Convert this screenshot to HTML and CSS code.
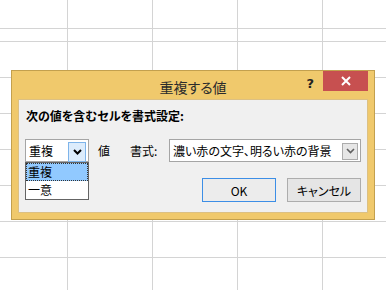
FILE: index.html
```html
<!DOCTYPE html>
<html lang="ja">
<head>
  <meta charset="UTF-8">
  <title>重複する値</title>
  <link rel="stylesheet" href="styles.css">
</head>
<body>
  <div class="sheet">
    <div></div><div></div><div></div><div></div><div></div>
    <div></div><div></div><div></div><div></div><div></div>
    <div></div><div></div><div></div><div></div><div></div>
    <div></div><div></div><div></div><div></div><div></div>
    <div></div><div></div><div></div><div></div><div></div>
    <div></div><div></div><div></div><div></div><div></div>
    <div></div><div></div><div></div><div></div><div></div>
    <div></div><div></div><div></div><div></div><div></div>
    <div></div><div></div><div></div><div></div><div></div>
  </div>

  <div class="dialog">
    <div class="titlebar">
      <span></span>
      <span class="title">重複する値</span>
      <div class="controls">
        <span class="help">?</span>
        <span class="close">
          <svg width="10" height="10" viewBox="0 0 10 10"><path d="M1 1L9 9M9 1L1 9" stroke="#fff" stroke-width="2"/></svg>
        </span>
      </div>
    </div>

    <div class="panel">
      <div class="heading">次の値を含むセルを書式設定:</div>
      <div class="row">
        <div class="combo kind">
          <span class="combo-text">重複</span>
          <span class="arrow hot">
            <svg width="9" height="6" viewBox="0 0 9 6"><path d="M1 1L4.5 4.5L8 1" fill="none" stroke="#000" stroke-width="2"/></svg>
          </span>
          <ul class="list">
            <li class="selected">重複</li>
            <li>一意</li>
          </ul>
        </div>
        <span class="label value-label">値</span>
        <span class="label">書式:</span>
        <div class="combo format">
          <span class="combo-text">濃い赤の文字、明るい赤の背景</span>
          <span class="arrow">
            <svg width="9" height="6" viewBox="0 0 9 6"><path d="M1 1L4.5 4.5L8 1" fill="none" stroke="#606060" stroke-width="1.6"/></svg>
          </span>
        </div>
      </div>
      <div class="buttons">
        <button class="btn default">OK</button>
        <button class="btn">キャンセル</button>
      </div>
    </div>
  </div>
</body>
</html>
```

FILE: styles.css
```css
body {
  margin: 0;
  background: #fff;
  font-family: "Noto Sans CJK JP", sans-serif;
  font-feature-settings: "palt";
  color: #000;
  overflow: hidden;
}
.sheet {
  display: grid;
  grid-template-columns: 68px 85px 85px 85px 1fr;
  grid-template-rows: 29px 13px repeat(7, 36px);
}
.sheet div {
  border-right: 1px solid #d4d4d4;
  border-bottom: 1px solid #d4d4d4;
  box-sizing: border-box;
}
.sheet div:nth-child(5n) {
  border-right: none;
}
.dialog {
  position: absolute;
  left: 11px;
  top: 70px;
  width: 364px;
  height: 150px;
  box-sizing: border-box;
  border: 1px solid #c3a04e;
  background: #f0c96c;
  padding: 0 6px 6px;
  display: flex;
  flex-direction: column;
}
.titlebar {
  height: 28px;
  display: grid;
  grid-template-columns: 1fr auto 1fr;
}
.title {
  font-size: 14px;
  line-height: 28px;
  padding-top: 2px;
  color: #2b2b2b;
}
.controls {
  justify-self: end;
  display: flex;
  align-items: flex-start;
}
.help {
  font-family: "DejaVu Sans", sans-serif;
  font-weight: bold;
  font-size: 13px;
  line-height: 20px;
  padding-top: 3px;
  margin-right: 9px;
  color: #222;
}
.close {
  width: 45px;
  height: 20px;
  background: #c75050;
  display: flex;
  align-items: center;
  justify-content: center;
}
.panel {
  flex: 1;
  border: 1px solid #dcc083;
  background: #f0f0f0;
  padding: 8px 6px 0;
}
.heading {
  font-size: 12px;
  font-weight: bold;
  line-height: 16px;
  margin-left: 1px;
}
.row {
  display: flex;
  align-items: center;
  margin-top: 15px;
  font-size: 12px;
}
.combo {
  position: relative;
  height: 23px;
  box-sizing: border-box;
  border: 1px solid #a5a5a5;
  background: #fff;
  display: flex;
  align-items: center;
  justify-content: space-between;
  padding: 0 2px 0 3px;
}
.combo-text {
  line-height: 16px;
}
.kind {
  width: 64px;
}
.format {
  width: 192px;
  margin-left: auto;
  padding-right: 2px;
}
.arrow {
  width: 16px;
  height: 17px;
  box-sizing: border-box;
  border: 1px solid #acacac;
  background: #e6e6e6;
  display: flex;
  align-items: center;
  justify-content: center;
  margin-top: 1px;
}
.arrow.hot {
  width: 18px;
  height: 20px;
  border-color: #7eb4ea;
  background: #dcecfc;
  margin-top: 2px;
}
.list {
  position: absolute;
  left: -1px;
  top: 22px;
  width: 64px;
  margin: 0;
  padding: 0;
  list-style: none;
  border: 1px solid #646464;
  box-sizing: border-box;
  background: #fff;
}
.list li {
  height: 18px;
  line-height: 18px;
  padding-left: 2px;
  box-sizing: border-box;
}
.list li.selected {
  background: #91c9ff;
  outline: 1px dotted #333;
  outline-offset: -1px;
}
.label {
  line-height: 16px;
}
.value-label {
  margin: 0 20px 0 9px;
}
.buttons {
  display: flex;
  justify-content: flex-end;
  gap: 11px;
  margin-top: 16px;
}
.btn {
  width: 74px;
  height: 24px;
  border: 1px solid #adadad;
  background: #e5e5e5;
  font-family: "Noto Sans CJK JP", sans-serif;
  font-feature-settings: "palt";
  font-size: 12px;
  color: #000;
  padding: 0;
}
.btn.default {
  border-color: #3c8ee6;
  background: #ececec;
}
```
